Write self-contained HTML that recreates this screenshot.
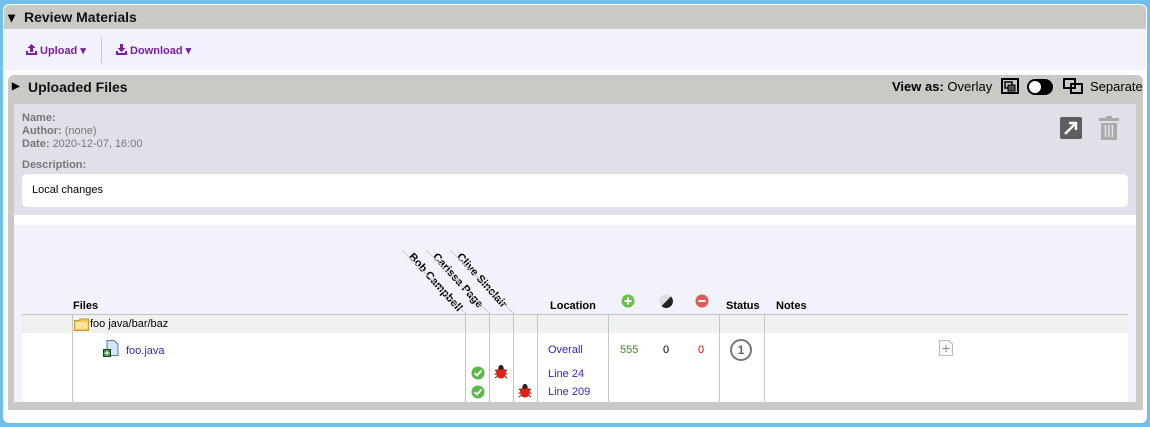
<!DOCTYPE html>
<html><head><meta charset="utf-8"><style>
*{margin:0;padding:0;box-sizing:border-box}
body{width:1150px;height:427px;background:#72bfe9;font-family:"Liberation Sans",sans-serif;position:relative;overflow:hidden}
.a{position:absolute}
.t{font-size:11px;color:#000;white-space:nowrap}
.b{font-weight:bold}
.lnk{color:#3b1fc4}
.vl{position:absolute;width:1px;background:#c9c4c4;top:315px;height:87px}
</style></head><body>
<div class="a" style="left:3px;top:4px;width:1144px;height:419px;background:#fff;border-radius:6px"></div>
<div class="a" style="left:4px;top:5px;width:1142px;height:24px;background:#c9cac6;border-radius:5px 5px 0 0"></div>
<div class="a b" style="left:8px;top:9px;font-size:14px">▾</div>
<div class="a b" style="left:24px;top:9px;font-size:14px;color:#111">Review Materials</div>
<div class="a" style="left:4px;top:29px;width:1142px;height:41px;background:#f2f2fc"></div>
<svg class="a" style="left:26px;top:44px" width="11" height="11" viewBox="0 0 11 11"><path d="M5.5 0L1.5 4H4V8H7V4H9.5Z M0 7V11H11V7H9V9H2V7Z" fill="#7a1fa2"/></svg>
<div class="a t b" style="left:40px;top:44px;color:#7a1fa2">Upload ▾</div>
<div class="a" style="left:101px;top:37px;width:1px;height:26px;background:#ccc"></div>
<svg class="a" style="left:116px;top:44px" width="11" height="11" viewBox="0 0 11 11"><path d="M5.5 8L1.5 4H4V0H7V4H9.5Z M0 7V11H11V7H9V9H2V7Z" fill="#7a1fa2"/></svg>
<div class="a t b" style="left:130px;top:44px;color:#7a1fa2">Download ▾</div>

<div class="a" style="left:8px;top:75px;width:1135px;height:335px;background:#c9cac6;border-radius:6px 6px 0 0"></div>
<div class="a b" style="left:12px;top:81px;font-size:10px">▶</div>
<div class="a b" style="left:28px;top:79px;font-size:14px;color:#111">Uploaded Files</div>
<div class="a" style="left:892px;top:79px;font-size:13px;white-space:nowrap"><b>View as:</b> Overlay</div>
<svg class="a" style="left:1000px;top:77px" width="20" height="18" viewBox="0 0 20 18"><rect x="2" y="2" width="16" height="14" fill="none" stroke="#000" stroke-width="2"/><rect x="5" y="5" width="7" height="6" fill="none" stroke="#000" stroke-width="1.5"/><rect x="8" y="8" width="7" height="6" fill="#555" stroke="#000" stroke-width="1"/></svg>
<div class="a" style="left:1027px;top:79px;width:26px;height:16px;background:#000;border-radius:8px"></div>
<div class="a" style="left:1029px;top:81px;width:12px;height:12px;background:#fff;border-radius:6px"></div>
<svg class="a" style="left:1062px;top:77px" width="22" height="18" viewBox="0 0 22 18"><rect x="2" y="2" width="11" height="9" fill="none" stroke="#000" stroke-width="2"/><rect x="9" y="7" width="11" height="9" fill="none" stroke="#000" stroke-width="2"/></svg>
<div class="a" style="left:1090px;top:79px;font-size:13px">Separate</div>

<div class="a" style="left:14px;top:104px;width:1122px;height:111px;background:#e0e0ea"></div>
<div class="a t b" style="left:22px;top:112px;color:#777;line-height:13px">Name:<br>Author: <span style="font-weight:normal">(none)</span><br>Date: <span style="font-weight:normal">2020-12-07, 16:00</span></div>
<div class="a t b" style="left:22px;top:159px;color:#777">Description:</div>
<div class="a" style="left:22px;top:174px;width:1106px;height:33px;background:#fff;border-radius:5px"></div>
<div class="a t" style="left:32px;top:184px">Local changes</div>
<svg class="a" style="left:1060px;top:117px" width="22" height="22" viewBox="0 0 22 22"><rect width="22" height="22" rx="2" fill="#5f5f5f"/><path d="M5 17L15 7M9 6H16V13" stroke="#fff" stroke-width="2.4" fill="none"/></svg>
<svg class="a" style="left:1098px;top:116px" width="22" height="24" viewBox="0 0 22 24"><rect x="1" y="2" width="20" height="3" fill="#aaa"/><rect x="8" y="0" width="6" height="3" fill="#aaa"/><path d="M3 7H19V24H3Z" fill="#aaa"/><path d="M7.5 9V21M11 9V21M14.5 9V21" stroke="#e0e0ea" stroke-width="1.5"/></svg>

<div class="a" style="left:14px;top:215px;width:1122px;height:10px;background:#fff"></div>
<div class="a" style="left:14px;top:225px;width:1122px;height:177px;background:#f2f2fc"></div>

<div class="a t b" style="left:415px;top:251px;transform-origin:0 0;transform:rotate(48deg);font-size:11px">Bob Campbell</div>
<div class="a t b" style="left:439px;top:251px;transform-origin:0 0;transform:rotate(48deg);font-size:11px">Carissa Page</div>
<div class="a t b" style="left:463px;top:251px;transform-origin:0 0;transform:rotate(48deg);font-size:11px">Clive Sinclair</div>
<svg class="a" style="left:400px;top:248px" width="140" height="70"><path d="M2 2L66 66M26 2L90 66M50 2L114 66" stroke="#ccc" stroke-width="1"/></svg>

<div class="a t b" style="left:73px;top:300px">Files</div>
<div class="a t b" style="left:550px;top:300px">Location</div>
<svg class="a" style="left:621px;top:294px" width="14" height="14"><circle cx="7" cy="7" r="6.5" fill="#6cbf4c"/><path d="M7 3.5V10.5M3.5 7H10.5" stroke="#fff" stroke-width="2"/></svg>
<svg class="a" style="left:659px;top:294px" width="14" height="14"><circle cx="7" cy="7" r="6.5" fill="#ddd"/><path d="M12 2.5A6.5 6.5 0 0 1 2.5 12Z" fill="#222"/></svg>
<svg class="a" style="left:695px;top:294px" width="14" height="14"><circle cx="7" cy="7" r="6.5" fill="#e05a55"/><path d="M3.5 7H10.5" stroke="#fff" stroke-width="2"/></svg>
<div class="a t b" style="left:726px;top:300px">Status</div>
<div class="a t b" style="left:776px;top:300px">Notes</div>

<div class="a" style="left:22px;top:314px;width:1106px;height:1px;background:#c9c4c4"></div>
<div class="a" style="left:22px;top:315px;width:1106px;height:18px;background:#f0f2f0"></div>
<div class="a" style="left:22px;top:333px;width:1106px;height:69px;background:#fff"></div>
<div class="vl" style="left:72px"></div>
<div class="vl" style="left:465px"></div><div class="vl" style="left:489px"></div><div class="vl" style="left:513px"></div><div class="vl" style="left:537px"></div>
<div class="vl" style="left:608px"></div><div class="vl" style="left:719px"></div><div class="vl" style="left:764px"></div>

<svg class="a" style="left:74px;top:318px" width="15" height="13"><path d="M0.5 2.5H5L6 1H14.5V12.5H0.5Z" fill="#f2c55a" stroke="#c99a30"/><rect x="1.5" y="4" width="12" height="7" fill="#fbe3a0"/></svg>
<div class="a t" style="left:90px;top:318px">foo java/bar/baz</div>
<svg class="a" style="left:103px;top:340px" width="16" height="17"><path d="M4 0.5H11L15 4.5V15.5H4Z" fill="#d6e6f9" stroke="#4a7ac0"/><rect x="0.5" y="9.5" width="7" height="7" fill="#2a9a3a" stroke="#333"/><path d="M4 10.5V15.5M1.5 13H6.5" stroke="#fff"/></svg>
<div class="a t lnk" style="left:126px;top:345px">foo.java</div>

<div class="a t lnk" style="left:548px;top:344px">Overall</div>
<div class="a t" style="left:620px;top:344px;color:#3a8a1a">555</div>
<div class="a t" style="left:663px;top:344px">0</div>
<div class="a t" style="left:698px;top:344px;color:#e00">0</div>
<div class="a" style="left:730px;top:339px;width:22px;height:22px;border:2px solid #777;border-radius:50%;font:bold 12px 'Liberation Sans',sans-serif;color:#666;text-align:center;line-height:18px">1</div>
<svg class="a" style="left:939px;top:340px" width="14" height="16"><path d="M0.5 0.5H10L13.5 4V15.5H0.5Z" fill="#fafafa" stroke="#bbb"/><path d="M7 5V12M3.5 8.5H10.5" stroke="#888"/></svg>

<div class="a t lnk" style="left:548px;top:368px">Line 24</div>
<div class="a t lnk" style="left:548px;top:386px">Line 209</div>
<svg class="a" style="left:471px;top:366px" width="14" height="14"><circle cx="7" cy="7" r="6.5" fill="#5cb84c"/><path d="M3.5 7L6 9.5L10.5 4.5" stroke="#fff" stroke-width="1.8" fill="none"/></svg>
<svg class="a" style="left:471px;top:385px" width="14" height="14"><circle cx="7" cy="7" r="6.5" fill="#5cb84c"/><path d="M3.5 7L6 9.5L10.5 4.5" stroke="#fff" stroke-width="1.8" fill="none"/></svg>
<svg class="a" style="left:494px;top:364px" width="14" height="15"><ellipse cx="7" cy="9" rx="5" ry="5.5" fill="#e02010"/><circle cx="7" cy="3.5" r="2.5" fill="#222"/><path d="M1 6L3 7M13 6L11 7M0.5 10H2M13.5 10H12M1 14L3 12.5M13 14L11 12.5" stroke="#222"/></svg>
<svg class="a" style="left:518px;top:383px" width="14" height="15"><ellipse cx="7" cy="9" rx="5" ry="5.5" fill="#e02010"/><circle cx="7" cy="3.5" r="2.5" fill="#222"/><path d="M1 6L3 7M13 6L11 7M0.5 10H2M13.5 10H12M1 14L3 12.5M13 14L11 12.5" stroke="#222"/></svg>
</body></html>
